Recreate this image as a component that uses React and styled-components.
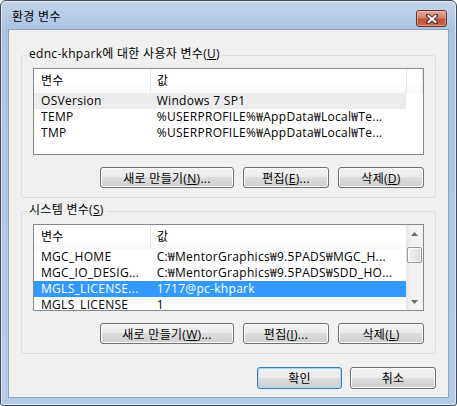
import React from "react";
import styled, { createGlobalStyle, css } from "styled-components";

const GlobalStyle = createGlobalStyle`
  html, body {
    margin: 0;
    padding: 0;
    background: #ffffff;
  }
  body {
    font-family: "Open Sans", "Noto Sans CJK KR", sans-serif;
    font-size: 12px;
    letter-spacing: 0.3px;
    color: #000;
  }
`;

const Window = styled.div`
  width: 457px;
  height: 406px;
  box-sizing: border-box;
  border: 1px solid #434d59;
  border-radius: 6px 6px 3px 3px;
  background: linear-gradient(180deg, #c3d6ec 0%, #aac4e2 28px, #b4cce8 100%);
  box-shadow: inset 0 0 0 1px rgba(255, 255, 255, 0.55);
  display: flex;
  flex-direction: column;
  padding: 0 7px 7px;
  overflow: hidden;
`;

const TitleBar = styled.div`
  height: 28px;
  box-sizing: border-box;
  display: flex;
  align-items: flex-start;
  justify-content: space-between;
  padding: 8px 2px 0 4px;
`;

const Title = styled.div`
  line-height: 16px;
  font-size: 12px;
`;

const CloseButton = styled.div`
  width: 31px;
  height: 17px;
  box-sizing: border-box;
  margin-top: 1px;
  border: 1px solid #6a3328;
  border-radius: 3px;
  background: linear-gradient(180deg, #e3a898 0%, #d3826c 45%, #c04f36 55%, #cb6c52 100%);
  box-shadow: inset 0 0 0 1px rgba(255, 220, 210, 0.4);
  display: flex;
  align-items: center;
  justify-content: center;
`;

const Client = styled.div`
  flex: 1;
  border: 1px solid #8ba3bd;
  background: #f0f0f0;
  display: flex;
  flex-direction: column;
  padding: 25px 12px 8px;
`;

const Group = styled.div`
  position: relative;
  border: 1px solid #d5dfe5;
  border-radius: 3px;
  padding: 12px 11px 9px;
  margin-bottom: 13px;
  display: flex;
  flex-direction: column;
`;

const GroupLabel = styled.div`
  position: absolute;
  top: -10px;
  left: 5px;
  padding: 0 2px;
  line-height: 16px;
  background: #f0f0f0;
`;

const Key = styled.span`
  text-decoration: underline;
`;

const ListView = styled.div`
  height: 87px;
  box-sizing: border-box;
  border: 1px solid #828790;
  background: #ffffff;
  display: flex;
  overflow: hidden;
`;

const ListBody = styled.div`
  flex: 1;
  display: flex;
  flex-direction: column;
  min-width: 0;
`;

const Header = styled.div`
  height: 24px;
  flex-shrink: 0;
  display: flex;
  background: linear-gradient(180deg, #ffffff 0%, #ffffff 60%, #f7f8f9 100%);
`;

const HeaderCell = styled.div`
  width: ${(p) => (p.$w ? `${p.$w}px` : "auto")};
  flex: ${(p) => (p.$w ? "none" : 1)};
  box-sizing: border-box;
  line-height: 24px;
  padding-left: ${(p) => p.$pad || 6}px;
  border-right: 1px solid #e5e5e5;
  white-space: nowrap;
`;

const Row = styled.div`
  height: 16px;
  flex-shrink: 0;
  display: flex;
  line-height: 16px;
  width: 372px;
  ${(p) =>
    p.$state === "active" &&
    css`
      background: #3399ff;
      color: #ffffff;
    `}
  ${(p) =>
    p.$state === "inactive" &&
    css`
      background: #ececec;
    `}
`;

const Cell = styled.div`
  width: ${(p) => p.$w}px;
  box-sizing: border-box;
  padding-left: ${(p) => p.$pad}px;
  white-space: nowrap;
  overflow: hidden;
`;

const ScrollBar = styled.div`
  width: 17px;
  flex-shrink: 0;
  display: flex;
  flex-direction: column;
  align-items: center;
  background: linear-gradient(90deg, #e6e6e6 0%, #f2f2f2 30%, #f4f4f4 100%);
`;

const ScrollArrow = styled.div`
  width: 17px;
  height: 17px;
  display: flex;
  align-items: center;
  justify-content: center;
`;

const Thumb = styled.div`
  width: 15px;
  height: 16px;
  box-sizing: border-box;
  margin-top: 5px;
  border: 1px solid #979797;
  border-radius: 2px;
  background: linear-gradient(90deg, #f3f3f3 0%, #e9e9e9 50%, #d8d8d8 100%);
  box-shadow: inset 0 0 0 1px rgba(255, 255, 255, 0.8);
`;

const Spacer = styled.div`
  flex: 1;
`;

const ButtonRow = styled.div`
  display: flex;
  justify-content: flex-end;
  gap: 9px;
  margin-top: 12px;
`;

const Button = styled.button`
  width: ${(p) => p.$w}px;
  height: ${(p) => p.$h || 21}px;
  box-sizing: border-box;
  padding: 0;
  font-family: inherit;
  font-size: 12px;
  letter-spacing: 0.3px;
  color: #000;
  border: 1px solid ${(p) => (p.$default ? "#3c7fb1" : "#707070")};
  border-radius: 3px;
  background: linear-gradient(180deg, #f2f2f2 0%, #ebebeb 50%, #dddddd 50%, #cfcfcf 100%);
  box-shadow: inset 0 0 0 1px ${(p) => (p.$default ? "#a4d8f2" : "#fbfbfb")};
  white-space: nowrap;
`;

const Footer = styled.div`
  display: flex;
  justify-content: flex-end;
  gap: 8px;
`;

const COL1 = 117;
const COL2 = 256;

function CloseGlyph() {
  return (
    <svg width="12" height="10" viewBox="0 0 12 10">
      <path d="M2 1.5 L10 8.5 M10 1.5 L2 8.5" stroke="#5a2a22" strokeWidth="4" strokeLinecap="square" />
      <path d="M2.5 2 L9.5 8 M9.5 2 L2.5 8" stroke="#ffffff" strokeWidth="2" strokeLinecap="square" />
    </svg>
  );
}

function Arrow({ down }) {
  return (
    <svg width="7" height="4" viewBox="0 0 7 4">
      <polygon points={down ? "0,0 7,0 3.5,4" : "3.5,0 7,4 0,4"} fill="#6f6f6f" />
    </svg>
  );
}

function VarList({ rows, scroll }) {
  return (
    <ListView>
      <ListBody>
        <Header>
          <HeaderCell $w={COL1} $pad={7}>변수</HeaderCell>
          <HeaderCell $w={COL2}>값</HeaderCell>
          {!scroll && <HeaderCell />}
        </Header>
        {rows.map((r) => (
          <Row key={r.name} $state={r.state}>
            <Cell $w={COL1} $pad={7}>{r.name}</Cell>
            <Cell $w={COL2} $pad={6}>{r.value}</Cell>
          </Row>
        ))}
      </ListBody>
      {scroll && (
        <ScrollBar>
          <ScrollArrow>
            <Arrow />
          </ScrollArrow>
          <Thumb />
          <Spacer />
          <ScrollArrow>
            <Arrow down />
          </ScrollArrow>
        </ScrollBar>
      )}
    </ListView>
  );
}

const userVars = [
  { name: "OSVersion", value: "Windows 7 SP1", state: "inactive" },
  { name: "TEMP", value: "%USERPROFILE%₩AppData₩Local₩Te..." },
  { name: "TMP", value: "%USERPROFILE%₩AppData₩Local₩Te..." },
];

const systemVars = [
  { name: "MGC_HOME", value: "C:₩MentorGraphics₩9.5PADS₩MGC_H..." },
  { name: "MGC_IO_DESIG...", value: "C:₩MentorGraphics₩9.5PADS₩SDD_HO..." },
  { name: "MGLS_LICENSE...", value: "1717@pc-khpark", state: "active" },
  { name: "MGLS_LICENSE", value: "1" },
];

export default function App() {
  return (
    <>
      <GlobalStyle />
      <Window>
        <TitleBar>
          <Title>환경 변수</Title>
          <CloseButton>
            <CloseGlyph />
          </CloseButton>
        </TitleBar>
        <Client>
          <Group>
            <GroupLabel>
              ednc-khpark에 대한 사용자 변수(<Key>U</Key>)
            </GroupLabel>
            <VarList rows={userVars} />
            <ButtonRow>
              <Button $w={134}>새로 만들기(<Key>N</Key>)...</Button>
              <Button $w={86}>편집(<Key>E</Key>)...</Button>
              <Button $w={86}>삭제(<Key>D</Key>)</Button>
            </ButtonRow>
          </Group>
          <Group>
            <GroupLabel>
              시스템 변수(<Key>S</Key>)
            </GroupLabel>
            <VarList rows={systemVars} scroll />
            <ButtonRow>
              <Button $w={134}>새로 만들기(<Key>W</Key>)...</Button>
              <Button $w={86}>편집(<Key>I</Key>)...</Button>
              <Button $w={86}>삭제(<Key>L</Key>)</Button>
            </ButtonRow>
          </Group>
          <Footer>
            <Button $w={85} $h={22} $default>확인</Button>
            <Button $w={86} $h={22}>취소</Button>
          </Footer>
        </Client>
      </Window>
    </>
  );
}
